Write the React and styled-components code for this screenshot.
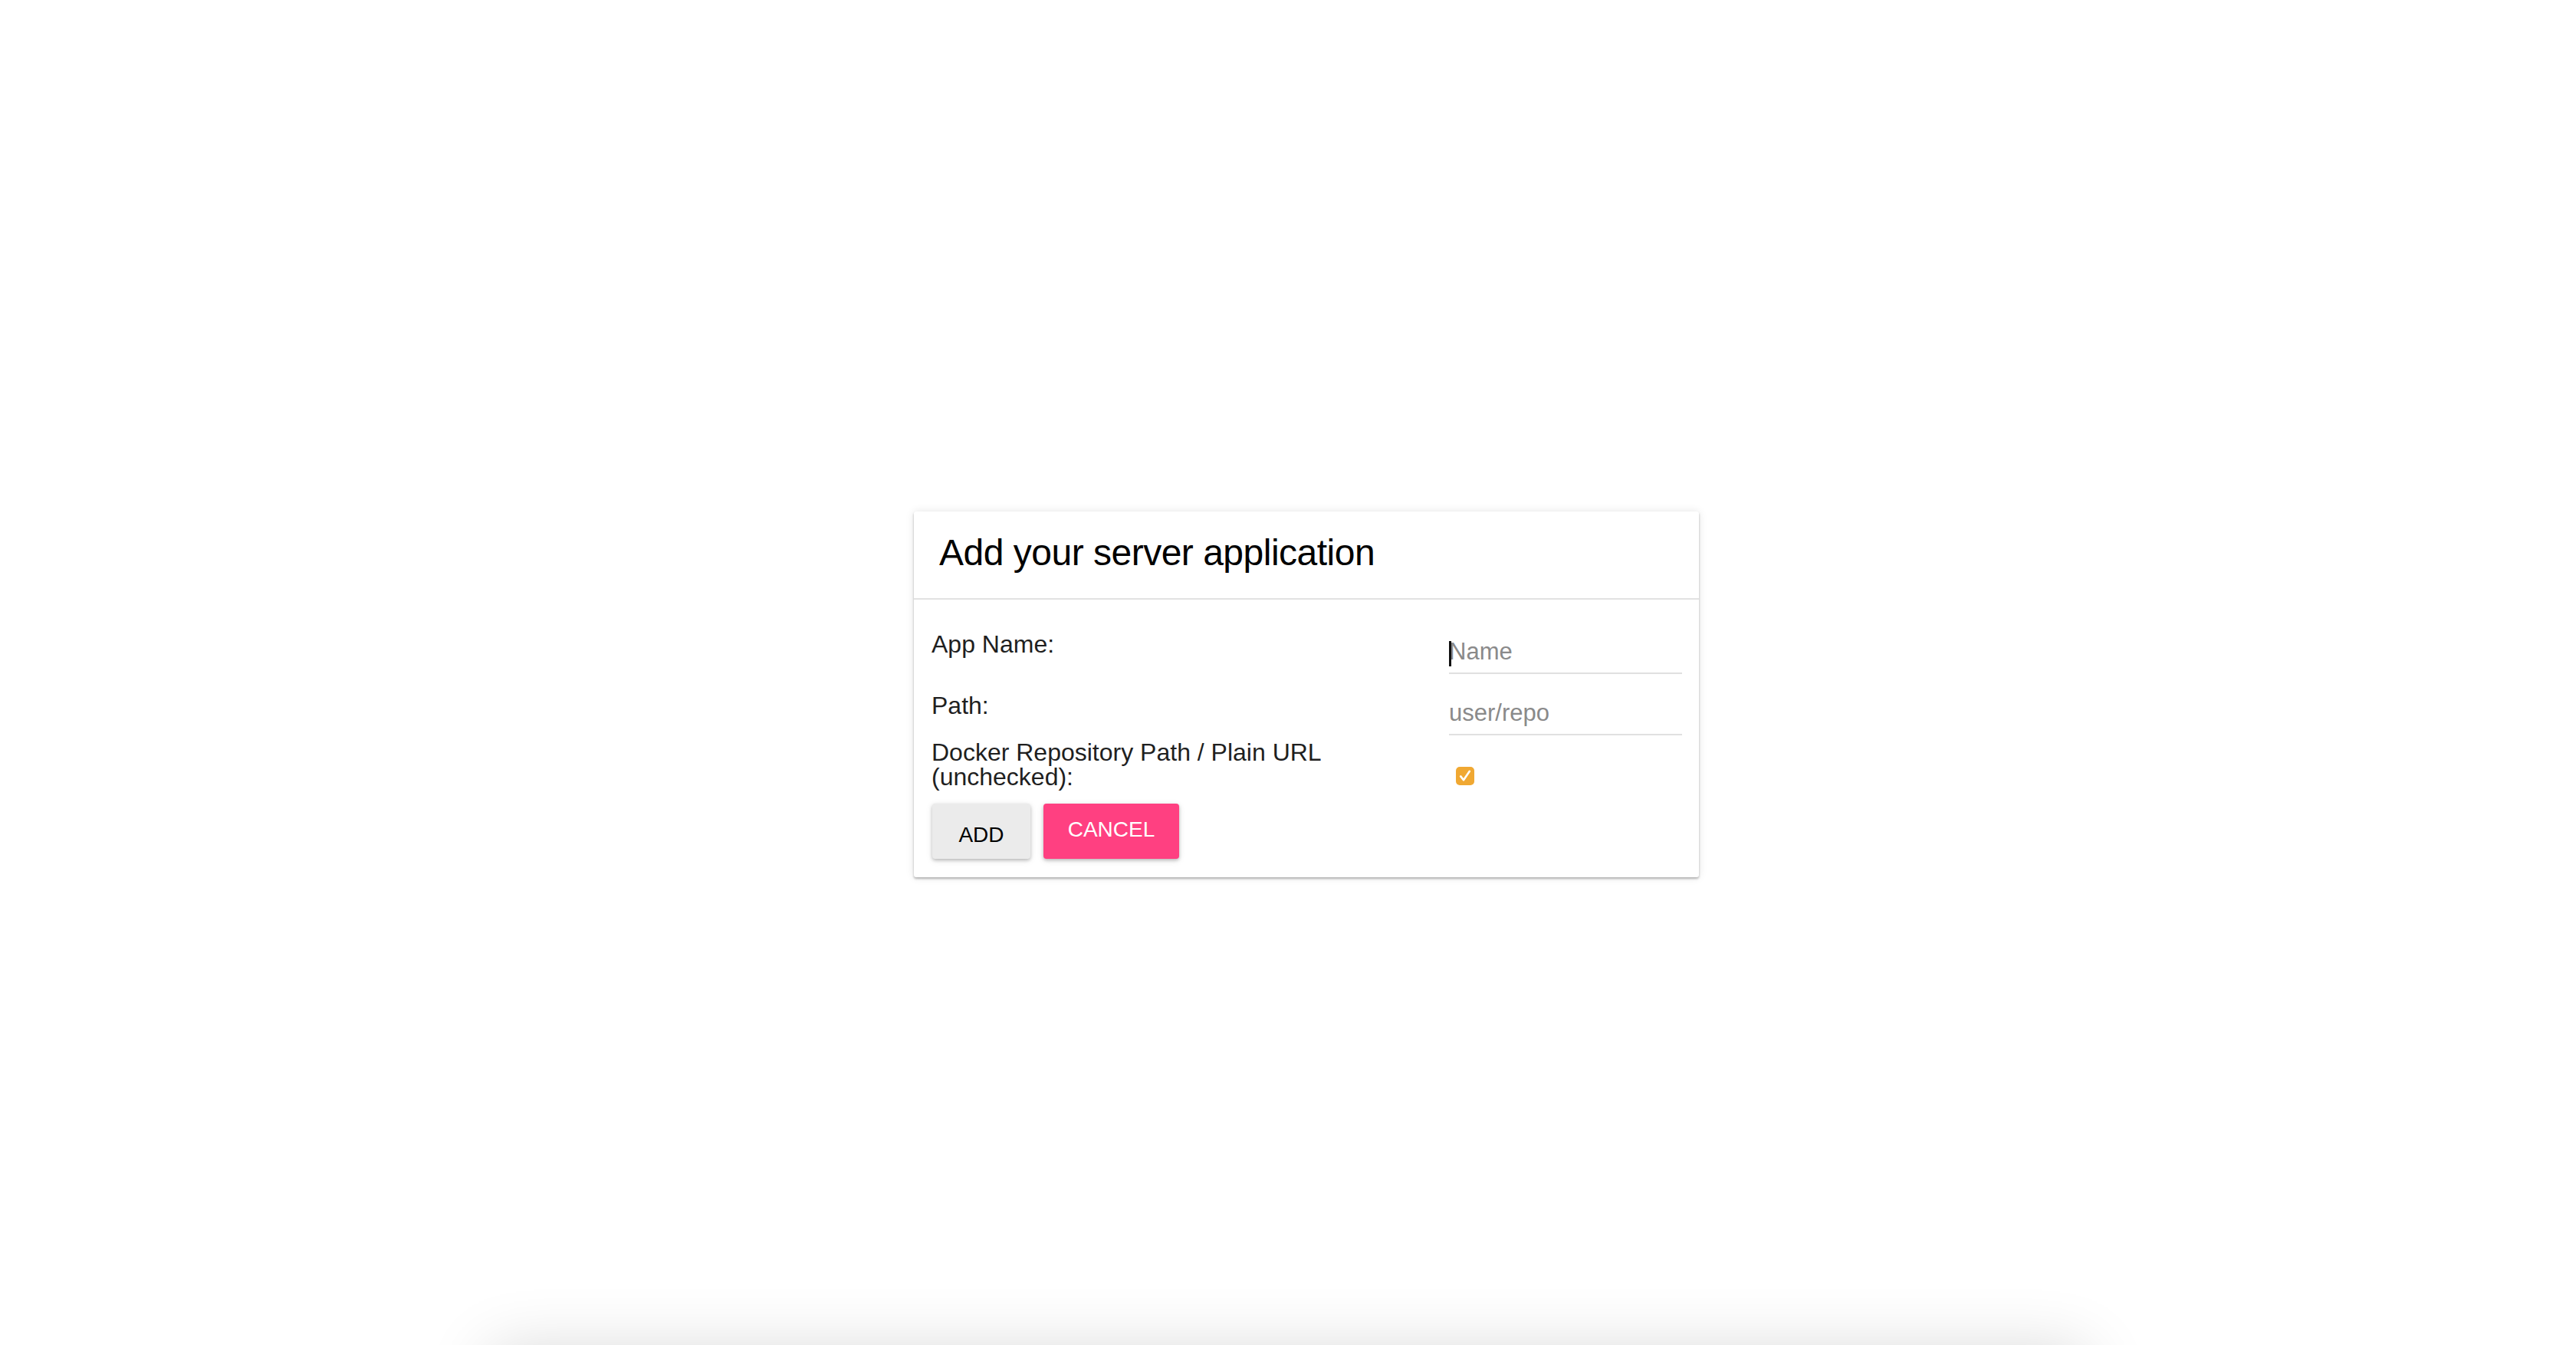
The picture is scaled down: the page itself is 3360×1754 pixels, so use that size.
import React from "react";
import styled, { createGlobalStyle } from "styled-components";

const Global = createGlobalStyle`
  html, body {
    margin: 0;
    padding: 0;
    background: #ffffff;
    overflow: hidden;
  }
  body {
    font-family: "Liberation Sans", Arial, Helvetica, sans-serif;
  }
`;

const Page = styled.div`
  display: flex;
  flex-direction: column;
  align-items: center;
  padding-top: 667px;
`;

const Dialog = styled.section`
  width: 1024px;
  margin-left: 48px;
  background: #fff;
  border-radius: 3px;
  box-shadow: 0 2px 3px rgba(0, 0, 0, 0.28), 0 0 12px rgba(0, 0, 0, 0.1);
  box-sizing: border-box;
`;

const Header = styled.header`
  padding: 26px 32px 31px 33px;
  border-bottom: 2px solid #e2e2e2;
`;

const Title = styled.h1`
  margin: 0;
  font-size: 48px;
  line-height: 56px;
  font-weight: 400;
  letter-spacing: -0.5px;
  color: #000;
`;

const Body = styled.div`
  padding: 40px 22px 24px 23px;
`;

const Row = styled.div`
  display: grid;
  grid-template-columns: 1fr 304px;
  align-items: start;
  margin-bottom: ${(p) => p.$after}px;
`;

const Label = styled.label`
  font-size: 32px;
  line-height: 32px;
  color: #1f1f1f;
  padding-top: ${(p) => p.$offset || 0}px;
`;

const Field = styled.div`
  position: relative;
  ${(p) =>
    p.$caret &&
    `
    &::before {
      content: "";
      position: absolute;
      left: 0;
      top: 14px;
      width: 3px;
      height: 33px;
      background: #111;
    }
  `}
`;

const TextInput = styled.input`
  display: block;
  width: 100%;
  height: 57px;
  box-sizing: border-box;
  border: none;
  border-bottom: 2px solid #e0e0e0;
  padding: 0;
  margin: 0;
  outline: none;
  background: transparent;
  font-family: "Liberation Sans", Arial, sans-serif;
  font-size: 31px;
  color: #222;
  &::placeholder {
    color: #8a8a8a;
  }
`;

const CheckCell = styled.div`
  padding-top: 35px;
  padding-left: 9px;
`;

const CheckBox = styled.span`
  display: flex;
  align-items: center;
  justify-content: center;
  width: 24px;
  height: 24px;
  border-radius: 5px;
  background: #f0a832;
`;

const Actions = styled.div`
  display: flex;
  gap: 17px;
  margin-top: 19px;
  margin-left: 1px;
`;

const Button = styled.button`
  box-sizing: border-box;
  height: 72px;
  border: none;
  border-radius: 4px;
  font-family: "Liberation Sans", Arial, sans-serif;
  font-size: 28px;
  line-height: 28px;
  text-transform: uppercase;
  cursor: pointer;
  box-shadow: 0 2px 4px rgba(0, 0, 0, 0.22), 0 2px 10px rgba(0, 0, 0, 0.1);
  background: ${(p) => (p.$primary ? "#ff4081" : "#ebebeb")};
  color: ${(p) => (p.$primary ? "#ffffff" : "#000000")};
  width: ${(p) => p.$w}px;
  padding: ${(p) => (p.$primary ? "20px 0 24px" : "27px 0 17px")};
  display: flex;
  justify-content: center;
  align-items: flex-start;
`;

const Backdrop = styled.div`
  width: 2080px;
  height: 400px;
  margin-top: 618px;
  background: #fff;
  box-shadow: 0 0 80px rgba(0, 0, 0, 0.16);
`;

export default function App() {
  return (
    <>
      <Global />
      <Page>
        <Dialog>
          <Header>
            <Title>Add your server application</Title>
          </Header>
          <Body>
            <Row $after={23}>
              <Label $offset={2}>App Name:</Label>
              <Field $caret>
                <TextInput placeholder="Name" />
              </Field>
            </Row>
            <Row $after={6}>
              <Label $offset={2}>Path:</Label>
              <Field>
                <TextInput placeholder="user/repo" />
              </Field>
            </Row>
            <Row $after={0}>
              <Label>
                Docker Repository Path / Plain URL
                <br />
                (unchecked):
              </Label>
              <CheckCell>
                <CheckBox>
                  <svg width="24" height="24" viewBox="0 0 24 24">
                    <path
                      d="M6.2 12.4 L10 17.2 L17.8 5.8"
                      fill="none"
                      stroke="#fff"
                      strokeWidth="2.6"
                      strokeLinecap="round"
                      strokeLinejoin="round"
                    />
                  </svg>
                </CheckBox>
              </CheckCell>
            </Row>
            <Actions>
              <Button $w={128}>Add</Button>
              <Button $w={177} $primary>
                Cancel
              </Button>
            </Actions>
          </Body>
        </Dialog>
        <Backdrop />
      </Page>
    </>
  );
}
